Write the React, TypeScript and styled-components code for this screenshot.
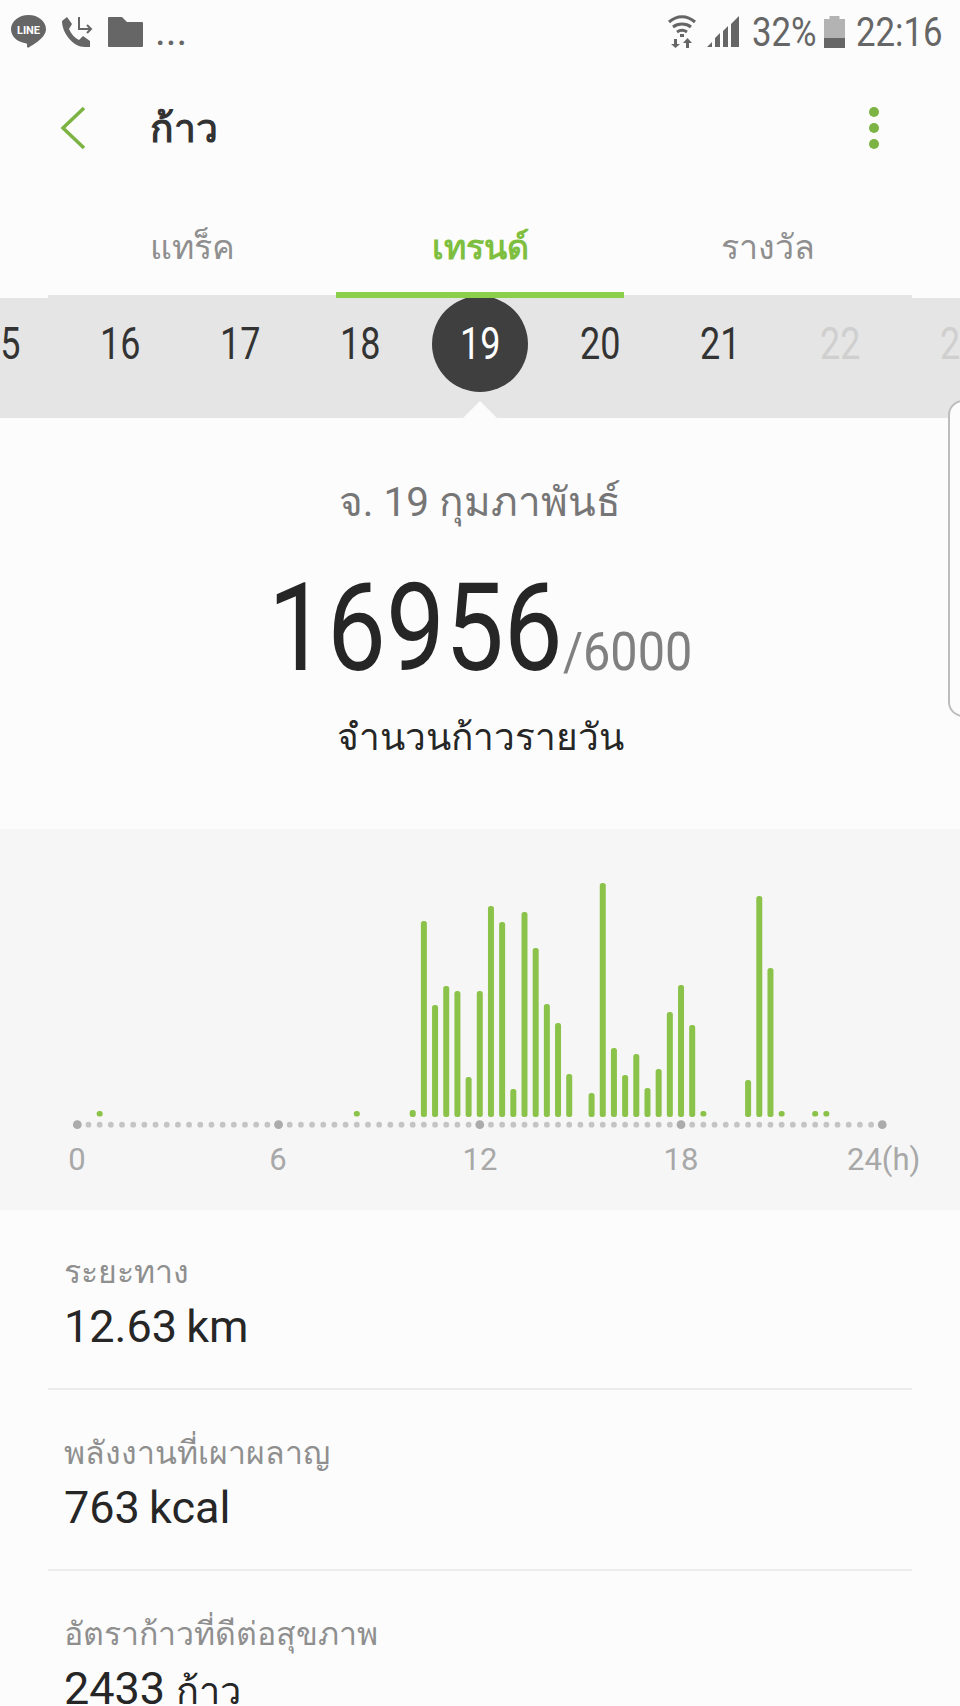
import React from "react";
import styled, { createGlobalStyle } from "styled-components";

const Global = createGlobalStyle`
  html, body { margin: 0; padding: 0; background: #fcfcfc; }
  body { font-family: Roboto, "Noto Sans", sans-serif; width: 960px; overflow: hidden; }
`;

const Page = styled.div`
  position: relative;
  width: 960px;
  height: 1706px;
  overflow: hidden;
  background: #fcfcfc;
`;

const StatusBar = styled.div`
  height: 64px;
  padding: 15px 17px 0 11px;
  box-sizing: border-box;
  display: flex;
  align-items: flex-start;
  justify-content: space-between;
  color: #666;
`;
const StatusLeft = styled.div`
  display: flex;
  align-items: center;
  gap: 15px;
  height: 33px;
`;
const StatusRight = styled.div`
  display: flex;
  align-items: center;
  gap: 11px;
  height: 33px;
`;
const StatusText = styled.span<{ $w: number }>`
  display: inline-block;
  width: ${(p) => p.$w}px;
  margin: 3px 0 0 0;
  font-size: 40px;
  line-height: 36px;
  white-space: nowrap;
  color: #666;
  transform: scaleX(0.87);
  transform-origin: left center;
`;
const BatteryPercent = styled(StatusText)`
  margin: 3px -3px 0 2px;
`;
const Ellipsis = styled.span`
  margin-left: -3px;
  font-size: 41px;
  line-height: 33px;
  color: #666;
`;

const Header = styled.div`
  height: 130px;
  display: flex;
  align-items: center;
  padding: 0 81px 2px 60px;
  box-sizing: border-box;
`;
const Title = styled.h1`
  margin: 0 0 0 64px;
  flex: 1;
  font-size: 39px;
  font-weight: 700;
  color: #333;
`;
const Dots = styled.div`
  display: flex;
  flex-direction: column;
  gap: 6px;
`;
const Dot = styled.span`
  width: 10px;
  height: 10px;
  border-radius: 50%;
  background: #7cb342;
`;

const Tabs = styled.div`
  margin: 0 48px;
  height: 104px;
  display: grid;
  grid-template-columns: repeat(3, 288px);
  box-sizing: border-box;
  border-bottom: 3px solid #e5e5e5;
`;
const Tab = styled.div<{ $active?: boolean }>`
  display: flex;
  justify-content: center;
  padding-top: 30px;
  height: 104px;
  box-sizing: border-box;
  font-size: 34px;
  line-height: 46px;
  font-weight: ${(p) => (p.$active ? 700 : 400)};
  color: ${(p) => (p.$active ? "#7fbf3f" : "#8f8f8f")};
  border-bottom: ${(p) => (p.$active ? "6px solid #8ccf4a" : "none")};
`;

const DateStrip = styled.div`
  position: relative;
  height: 120px;
  background: #e5e5e5;
  display: grid;
  grid-template-columns: repeat(9, 120px);
  margin-left: -60px;
  width: 1080px;
  clip-path: polygon(0 0, 100% 0, 100% 100%, 557px 100%, 540px 103px, 523px 100%, 0 100%);
`;
const DateCell = styled.div<{ $state: "normal" | "selected" | "future" }>`
  height: 90px;
  display: flex;
  align-items: center;
  justify-content: center;
  font-size: 45px;
  color: ${(p) =>
    p.$state === "selected" ? "#fff" : p.$state === "future" ? "#cfcfcf" : "#333"};
  position: relative;
  & > span { transform: scaleX(0.8); position: relative; display: inline-block; }
  ${(p) =>
    p.$state === "selected"
      ? `&::before {content: ""; position: absolute; left: 12px; top: -2px; width: 96px; height: 96px; border-radius: 50%; background: #3f3f3f;}`
      : ""}
`;

const Summary = styled.div`
  height: 411px;
  display: flex;
  flex-direction: column;
  align-items: center;
  padding-top: 60px;
  box-sizing: border-box;
`;
const DateLabel = styled.div`
  font-size: 40.500px;
  line-height: 48px;
  color: #767676;
`;
const CountRow = styled.div`
  margin-top: 43px;
  display: flex;
  align-items: baseline;
  height: 120px;
  line-height: 120px;
`;
const Count = styled.span`
  display: inline-block;
  font-size: 122px;
  color: #262626;
  transform: scaleX(0.86);
  transform-origin: right center;
  margin-left: -48px;
`;
const Goal = styled.span`
  display: inline-block;
  font-size: 54px;
  color: #808080;
  transform: scaleX(0.9);
  transform-origin: left center;
  margin-right: -15px;
`;
const CountLabel = styled.div`
  margin-top: 24px;
  font-size: 37px;
  line-height: 50px;
  color: #262626;
`;

const ChartBand = styled.div`
  height: 381px;
  background: #f6f6f6;
`;

const Stats = styled.div`
  padding: 0 48px;
`;
const Stat = styled.div<{ $last?: boolean }>`
  height: 180px;
  margin-bottom: 1px;
  padding: 42px 16px 0;
  box-sizing: border-box;
  border-bottom: ${(p) => (p.$last ? "none" : "2px solid #ececec")};
`;
const StatLabel = styled.div`
  font-size: 32px;
  line-height: 40px;
  color: #8f8f8f;
`;
const StatValue = styled.div`
  margin-top: 7px;
  font-size: 45px;
  line-height: 56px;
  word-spacing: -2px;
  color: #262626;
`;
const ThaiUnit = styled.span`
  font-size: 38px;
  margin-left: 2px;
`;

const EdgeHandle = styled.div`
  position: absolute;
  left: 948px;
  top: 400px;
  width: 30px;
  height: 317px;
  background: #fcfcfc;
  border: 2px solid #bdbdbd;
  border-radius: 16px;
  box-sizing: border-box;
`;

const bars: [number, number][] = [
  [2, 1110],[25, 1110],[30, 1110],[31, 921],[32, 1005],[33, 986],[34, 991],[35, 1077],[36, 991],
  [37, 906],[38, 922],[39, 1089],[40, 912],[41, 948],[42, 1004],[43, 1023],[44, 1074],
  [46, 1093],[47, 883],[48, 1048],[49, 1075],[50, 1054],[51, 1088],[52, 1069],[53, 1012],[54, 985],[55, 1025],
  [56, 1110],[60, 1080],[61, 896],[62, 968],[63, 1110],[66, 1110],[67, 1110],
];
const X0 = 77.3;
const STEP = 11.18;
const TOP = 829;

function Chart() {
  const dots = Array.from({ length: 73 }, (_, i) => i);
  const labels: [string, number][] = [["0", 77], ["6", 278], ["12", 480], ["18", 681], ["24(h)", 883]];
  return (
    <svg width="960" height="381" viewBox={`0 ${TOP} 960 381`} style={{ display: "block" }}>
      {dots.map((i) => (
        <circle key={i} cx={X0 + i * STEP} cy={1124.7} r={i % 18 === 0 ? 4.4 : 2.9} fill={i % 18 === 0 ? "#ababab" : "#c4c4c4"} />
      ))}
      {bars.map(([i, top]) => (
        <rect key={i} x={X0 + i * STEP - 3} y={top === 1110 && i !== 30 ? 1111 : top} width={6} height={top === 1110 && i !== 30 ? 5.5 : 1117 - top} rx={2.5} fill="#8bc34a" />
      ))}
      {labels.map(([t, x]) => (
        <text key={t} x={t === "24(h)" ? 847 : x} y={1170} fontSize={31} fill="#a8a8a8" fontFamily="Roboto" textAnchor={t === "24(h)" ? "start" : "middle"}>{t}</text>
      ))}
    </svg>
  );
}

const LineIcon = () => (
  <svg width="35" height="33" viewBox="0 0 35 33"><path d="M17.500 0C7.800 0 0 6.300 0 14.200c0 7 6.200 12.800 14.500 14 .6.100 1.300.4 1.500.8.200.5.100 1.700 0 2.500-.1.800.8 1.400 1.700.9 4.400-2.400 17.300-9.800 17.300-18.200C35 6.300 27.200 0 17.500 0z" fill="#666"/><text x="17.500" y="19" fontSize="11" fontWeight="700" fill="#fff" textAnchor="middle" fontFamily="Roboto">LINE</text></svg>
);
const CallIcon = () => (
  <svg width="32" height="30" viewBox="0 0 32 30"><path d="M1 4 6 0l5 7-3 5c2 5 6 9 10 11l4-4 7 5v6h-5C12 30 1 16 1 4z" fill="#666"/><path d="M18 0v12h12M26 8l4 4-4 4" fill="none" stroke="#666" strokeWidth="2"/></svg>
);
const FolderIcon = () => (
  <svg width="35" height="30" viewBox="0 0 35 30"><path d="M1 0h13l5 5h15a1 1 0 0 1 1 1v23a1 1 0 0 1-1 1H1a1 1 0 0 1-1-1V1a1 1 0 0 1 1-1z" fill="#666"/></svg>
);
const WifiIcon = () => (
  <svg width="28" height="33" viewBox="0 0 28 33"><g fill="none" stroke="#666" strokeWidth="3"><path d="M1 7c8-7 18-7 26 0M5 12c5-4 13-4 18 0M9 17c3-2 7-2 10 0"/></g><path d="M12 19h4v3h-4zM6 24h3v5h3l-4.500 4L3 29h3zM21 33h-3v-5h-3l4.500-5 4.500 5h-3z" fill="#666"/></svg>
);
const SignalIcon = () => (
  <svg width="32" height="31" viewBox="0 0 32 31"><path d="M0 31l5-5v5zM8 31v-9l5-5v14zM16 31V15l5-5v21zM24 31V8l8-8v31z" fill="#666"/></svg>
);
const BatteryIcon = () => (
  <svg width="21" height="32" viewBox="0 0 21 32"><path d="M5.500 0h10v3H21v19H0V3h5.500z" fill="#b3b3b3"/><rect y="22" width="21" height="10" fill="#666"/></svg>
);
const BackIcon = () => (
  <svg width="26" height="44" viewBox="0 0 26 44"><path d="M24 2 3 22l21 20" fill="none" stroke="#7cb342" strokeWidth="3.500"/></svg>
);

const dates: [string, "normal" | "selected" | "future"][] = [
  ["15", "normal"],["16", "normal"],["17", "normal"],["18", "normal"],["19", "selected"],["20", "normal"],["21", "normal"],["22", "future"],["23", "future"],
];

export default function App() {
  return (
    <Page>
      <Global />
      <StatusBar>
        <StatusLeft>
          <LineIcon /><CallIcon /><FolderIcon /><Ellipsis>...</Ellipsis>
        </StatusLeft>
        <StatusRight>
          <WifiIcon /><SignalIcon /><BatteryPercent $w={64}>32%</BatteryPercent><BatteryIcon /><StatusText $w={87}>22:16</StatusText>
        </StatusRight>
      </StatusBar>
      <Header>
        <BackIcon />
        <Title>ก้าว</Title>
        <Dots><Dot /><Dot /><Dot /></Dots>
      </Header>
      <Tabs>
        <Tab>แทร็ค</Tab>
        <Tab $active>เทรนด์</Tab>
        <Tab>รางวัล</Tab>
      </Tabs>
      <DateStrip>
        {dates.map(([d, s]) => (
          <DateCell key={d} $state={s}><span>{d}</span></DateCell>
        ))}
      </DateStrip>
      <Summary>
        <DateLabel>จ. 19 กุมภาพันธ์</DateLabel>
        <CountRow><Count>16956</Count><Goal>/6000</Goal></CountRow>
        <CountLabel>จำนวนก้าวรายวัน</CountLabel>
      </Summary>
      <ChartBand><Chart /></ChartBand>
      <Stats>
        <Stat><StatLabel>ระยะทาง</StatLabel><StatValue>12.63 km</StatValue></Stat>
        <Stat><StatLabel>พลังงานที่เผาผลาญ</StatLabel><StatValue>763 kcal</StatValue></Stat>
        <Stat $last><StatLabel>อัตราก้าวที่ดีต่อสุขภาพ</StatLabel><StatValue>2433 <ThaiUnit>ก้าว</ThaiUnit></StatValue></Stat>
      </Stats>
      <EdgeHandle />
    </Page>
  );
}
